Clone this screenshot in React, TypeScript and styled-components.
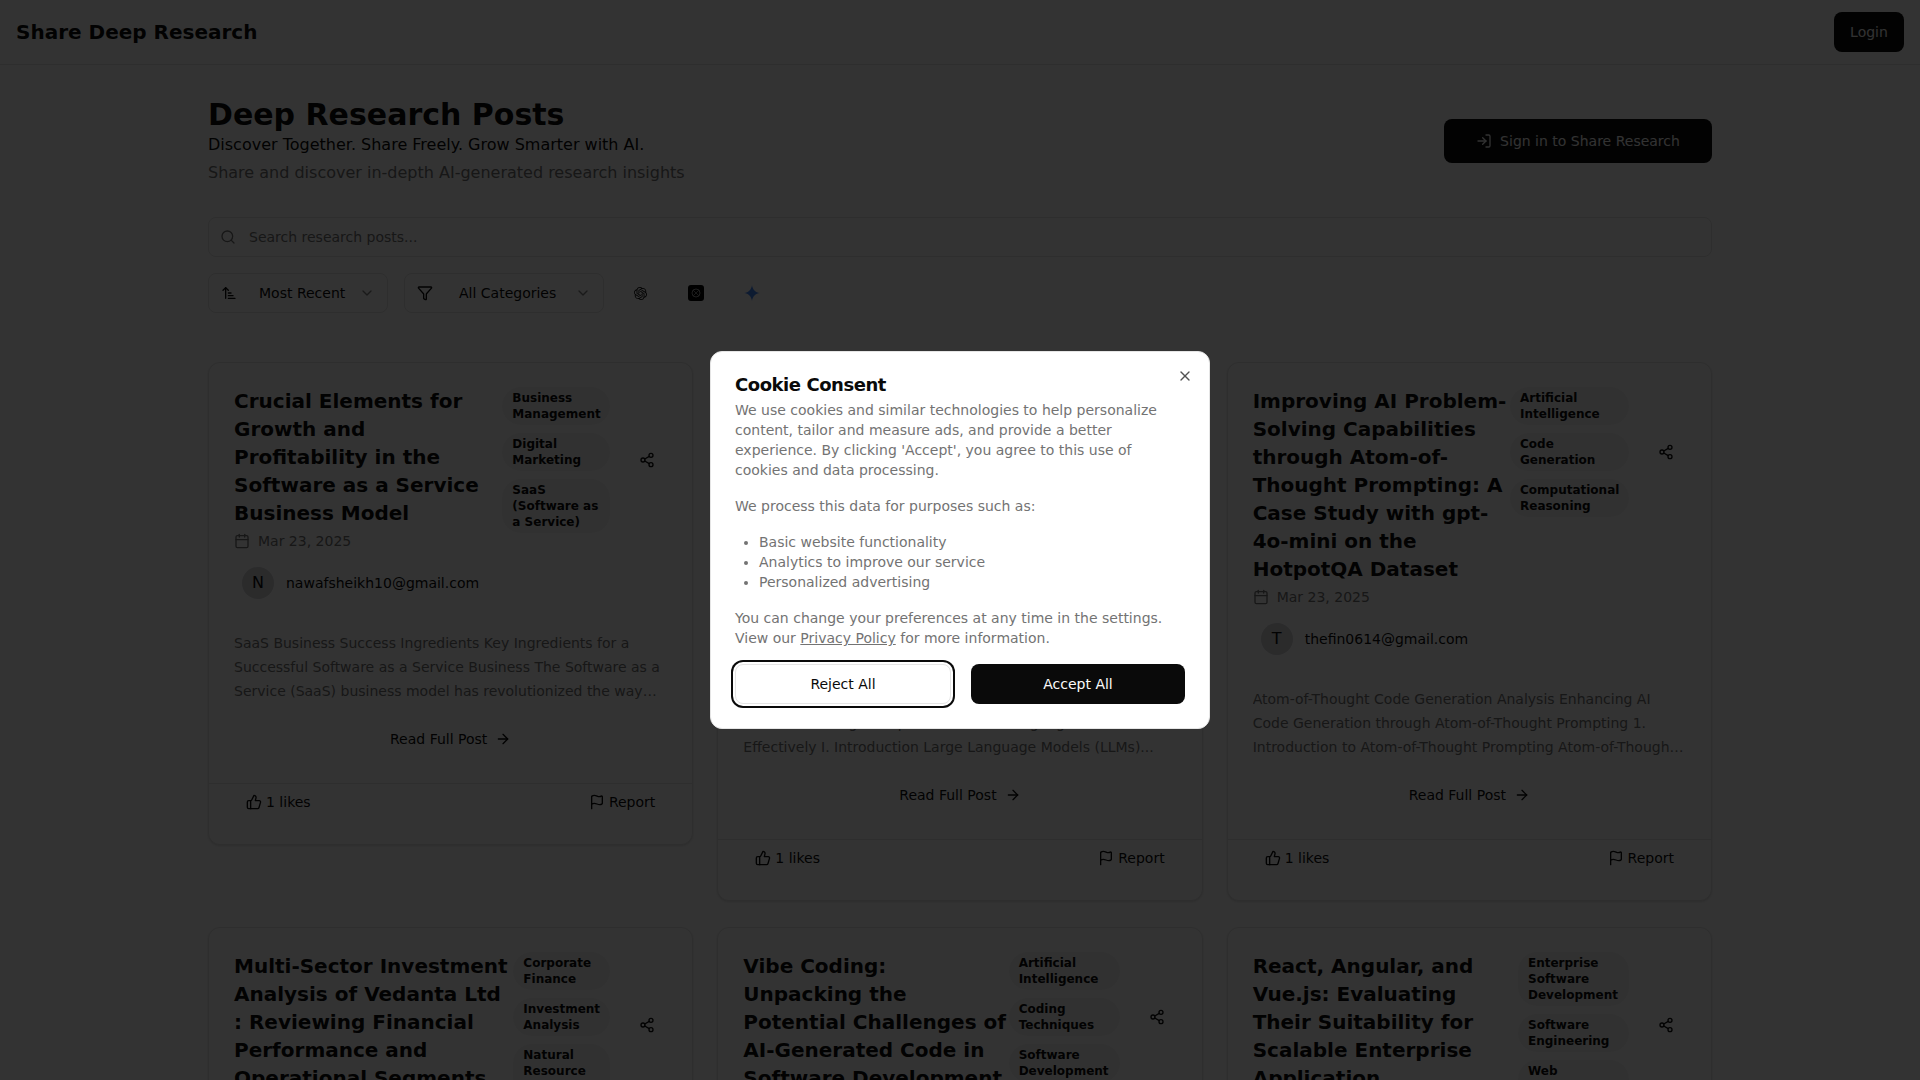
import React from 'react';
import styled, { createGlobalStyle } from 'styled-components';
import {
  ArrowRight, ArrowUpNarrowWide, Calendar, ChevronDown, Flag, Funnel, LogIn, Search, Share2, ThumbsUp, X,
} from 'lucide-react';
import { SiOpenai } from 'react-icons/si';

const GlobalStyle = createGlobalStyle`
  html, body { margin: 0; padding: 0; height: 100%; overflow: hidden; background: #fff; }
  body { font-family: "DejaVu Sans", sans-serif; color: #0a0a0a; font-size: 16px; line-height: 24px; }
  * { box-sizing: border-box; }
`;

const Page = styled.div`height: 1080px; overflow: hidden;`;

const TopBar = styled.header`
  height: 65px; padding: 0 16px; display: flex; align-items: center; justify-content: space-between;
  border-bottom: 1px solid #e5e5e5;
`;
const Brand = styled.div`font-size: 20px; line-height: 28px; font-weight: 700;`;
const PrimaryButton = styled.button<{ $h: number; $w: number }>`
  height: ${p => p.$h}px; width: ${p => p.$w}px; border: 0; border-radius: 8px; background: #0a0a0a; color: #fafafa;
  font: 14px/20px "DejaVu Sans", sans-serif; display: inline-flex; align-items: center; justify-content: center; gap: 8px; padding: 0;
`;

const Main = styled.main`width: 1504px; margin: 0 auto; padding-top: 32px;`;
const Intro = styled.section`display: flex; align-items: center; justify-content: space-between; margin-bottom: 32px;`;
const IntroText = styled.div`display: flex; flex-direction: column;`;
const Heading = styled.h1`margin: 0; font-size: 30px; line-height: 36px; font-weight: 700;`;
const Tagline = styled.p`margin: 0; font-size: 16px; line-height: 24px;`;
const Lead = styled.p`margin: 4px 0 0; font-size: 16px; line-height: 24px; color: #737373;`;

const SearchBox = styled.div`
  height: 40px; border: 1px solid #e5e5e5; border-radius: 8px; display: flex; align-items: center; gap: 13px;
  padding: 0 11px; font-size: 14px; color: #737373; margin-bottom: 16px;
`;

const Filters = styled.div`display: flex; align-items: center; gap: 16px; margin-bottom: 49px;`;
const Select = styled.div<{ $w: number }>`
  width: ${p => p.$w}px; height: 40px; border: 1px solid #e5e5e5; border-radius: 8px; display: flex; align-items: center;
  padding: 0 12px; font-size: 14px; color: #0a0a0a; white-space: nowrap;
  svg { flex: none; }
  svg:last-child { margin-left: auto; opacity: .5; }
`;
const SelectLabel = styled.span<{ $indent: number }>`margin-left: ${p => p.$indent}px;`;
const IconSlot = styled.div`width: 40px; height: 40px; display: flex; align-items: center; justify-content: center;`;

const Grid = styled.div`display: grid; grid-template-columns: repeat(3, 1fr); gap: 26px 24px; align-items: start;`;
const Card = styled.article`
  border: 1px solid #e5e5e5; border-radius: 12px; background: #fff;
  box-shadow: 0 1px 3px rgba(0,0,0,.1), 0 1px 2px -1px rgba(0,0,0,.1);
`;
const CardBody = styled.div`padding: 24px 25px;`;
const CardHead = styled.div`display: flex; align-items: flex-start; gap: 2px;`;
const TitleCol = styled.div`flex: 1; min-width: 0;`;
const CardTitle = styled.h2`margin: 0; font-size: 20px; line-height: 28px; font-weight: 700;`;
const TagGroup = styled.div`flex: none; display: flex; align-items: center; gap: 17px;`;
const TagCol = styled.div<{ $w: number }>`width: ${p => p.$w}px; flex: none; display: flex; flex-direction: column; gap: 8px;`;
const Tag = styled.span`
  display: block; padding: 3px 10px; border-radius: 19px; background: #f5f5f5; font-size: 12px; line-height: 16px; font-weight: 700;
`;
const ShareSlot = styled.div`
  width: 40px; height: 40px; flex: none; display: flex; align-items: center; justify-content: center;
`;
const DateRow = styled.div`
  margin-top: 4px; display: flex; align-items: center; gap: 8px; height: 20px; font-size: 14px; color: #737373;
`;
const AuthorRow = styled.div`margin: 16px 0 32px 8px; display: flex; align-items: center; gap: 12px; font-size: 14px;`;
const Avatar = styled.div`
  width: 32px; height: 32px; border-radius: 50%; background: #d4d4d8; font-size: 16px; display: flex; align-items: center; justify-content: center;
`;
const Excerpt = styled.p`
  margin: 0; font-size: 14px; line-height: 24px; color: #737373; height: 72px;
  display: -webkit-box; -webkit-line-clamp: 3; -webkit-box-orient: vertical; overflow: hidden;
`;
const ReadMore = styled.div`
  margin-top: 16px; height: 40px; display: flex; align-items: center; justify-content: center; gap: 8px; font-size: 14px;
`;
const CardFoot = styled.footer`
  border-top: 1px solid #e5e5e5; padding: 0 25px 24px; display: flex; justify-content: space-between;
`;
const GhostAction = styled.div`
  height: 36px; padding: 0 12px; display: flex; align-items: center; gap: 4px; font-size: 14px;
`;

const Overlay = styled.div`
  position: fixed; inset: 0; background: rgba(0,0,0,.8); display: flex; align-items: center; justify-content: center;
`;
const Dialog = styled.div`
  position: relative; width: 500px; height: 378px; background: #fff; border: 1px solid #e5e5e5; border-radius: 12px; padding: 24px;
`;
const CloseButton = styled.div`position: absolute; top: 15px; right: 16px; height: 16px; opacity: .7; color: #0a0a0a;`;
const DialogTitle = styled.h2`margin: 0; font-size: 18px; line-height: 18px; font-weight: 700; color: #0a0a0a; letter-spacing: -0.45px;`;
const DialogText = styled.div`
  margin-top: 6px; font-size: 14px; line-height: 20px; color: #737373;
  p { margin: 0 0 16px; }
  ul { margin: 0 0 16px; padding-left: 24px; }
  p:last-child { margin-bottom: 0; }
  a { color: inherit; text-decoration: underline; }
`;
const DialogActions = styled.div`margin-top: 16px; display: grid; grid-template-columns: 216px 214px; gap: 20px;`;
const RejectButton = styled.button`
  height: 40px; border: 1px solid #e5e5e5; border-radius: 8px; background: #fff; color: #0a0a0a;
  font: 14px/20px "DejaVu Sans", sans-serif; box-shadow: 0 0 0 2px #fff, 0 0 0 4px #0a0a0a; padding: 0;
`;
const AcceptButton = styled.button`
  height: 40px; border: 0; border-radius: 8px; background: #0a0a0a; color: #fafafa; font: 14px/20px "DejaVu Sans", sans-serif; padding: 0;
`;

type Post = { title: string; tags: string[]; tagW: number; date: string; email: string; excerpt: string };

const posts: Post[] = [
  {
    title: 'Crucial Elements for Growth and Profitability in the Software as a Service Business Model',
    tags: ['Business Management', 'Digital Marketing', 'SaaS (Software as a Service)'], tagW: 108,
    date: 'Mar 23, 2025', email: 'nawafsheikh10@gmail.com',
    excerpt: 'SaaS Business Success Ingredients Key Ingredients for a Successful Software as a Service Business The Software as a Service (SaaS) business model has revolutionized the way software is delivered and consumed by businesses',
  },
  {
    title: 'A Practical and Comprehensive Guide to Prompt Engineering: Getting Better Results from Large Language Models Effectively',
    tags: ['Artificial Intelligence', 'Prompt Engineering', 'Large Language Models'], tagW: 119,
    date: 'Mar 23, 2025', email: 'thefin0614@gmail.com',
    excerpt: 'Prompt Engineering Guide Mastering Prompt Engineering: A Guide to Writing Prompts for Modern Language Models Effectively I. Introduction Large Language Models (LLMs)...',
  },
  {
    title: 'Improving AI Problem-Solving Capabilities through Atom-of-Thought Prompting: A Case Study with gpt-4o-mini on the HotpotQA Dataset',
    tags: ['Artificial Intelligence', 'Code Generation', 'Computational Reasoning'], tagW: 119,
    date: 'Mar 23, 2025', email: 'thefin0614@gmail.com',
    excerpt: 'Atom-of-Thought Code Generation Analysis Enhancing AI Code Generation through Atom-of-Thought Prompting 1. Introduction to Atom-of-Thought Prompting Atom-of-Thought prompting is a technique for breaking problems into smaller parts',
  },
  {
    title: 'Multi-Sector Investment Analysis of Vedanta Ltd : Reviewing Financial Performance and Operational Segments',
    tags: ['Corporate Finance', 'Investment Analysis', 'Natural Resource Management'], tagW: 97,
    date: 'Mar 23, 2025', email: 'thefin0614@gmail.com', excerpt: 'Vedanta Ltd investment analysis',
  },
  {
    title: 'Vibe Coding: Unpacking the Potential Challenges of AI-Generated Code in Software Development',
    tags: ['Artificial Intelligence', 'Coding Techniques', 'Software Development'], tagW: 111,
    date: 'Mar 23, 2025', email: 'thefin0614@gmail.com', excerpt: 'Vibe coding analysis',
  },
  {
    title: 'React, Angular, and Vue.js: Evaluating Their Suitability for Scalable Enterprise Application',
    tags: ['Enterprise Software Development', 'Software Engineering', 'Web Development'], tagW: 111,
    date: 'Mar 23, 2025', email: 'thefin0614@gmail.com', excerpt: 'Framework evaluation',
  },
];

const GrokMark = () => (
  <svg width="16" height="16" viewBox="0 0 16 16" aria-hidden="true">
    <rect width="16" height="16" rx="3" fill="#000" />
    <circle cx="8" cy="8" r="4" fill="none" stroke="#9a9a9a" strokeWidth="1" />
    <path d="M5 5l6 6M11 5l-6 6" stroke="#9a9a9a" strokeWidth="0.8" />
  </svg>
);

const GeminiMark = () => (
  <svg width="16" height="16" viewBox="0 0 16 16" aria-hidden="true">
    <path d="M8 0C8.6 4.6 11.4 7.4 16 8 11.4 8.6 8.6 11.4 8 16 7.4 11.4 4.6 8.6 0 8 4.6 7.4 7.4 4.6 8 0Z" fill="#4285f4" />
  </svg>
);

const PostCard = ({ post }: { post: Post }) => (
  <Card>
    <CardBody>
      <CardHead>
        <TitleCol>
          <CardTitle>{post.title}</CardTitle>
          <DateRow><Calendar size={16} color="#737373" />{post.date}</DateRow>
        </TitleCol>
        <TagGroup>
          <TagCol $w={post.tagW}>
            {post.tags.map(t => <Tag key={t}>{t}</Tag>)}
          </TagCol>
          <ShareSlot><Share2 size={16} /></ShareSlot>
        </TagGroup>
      </CardHead>
      <AuthorRow><Avatar>{post.email[0].toUpperCase()}</Avatar>{post.email}</AuthorRow>
      <Excerpt>{post.excerpt}</Excerpt>
      <ReadMore>Read Full Post <ArrowRight size={16} /></ReadMore>
    </CardBody>
    <CardFoot>
      <GhostAction><ThumbsUp size={16} />1 likes</GhostAction>
      <GhostAction><Flag size={16} />Report</GhostAction>
    </CardFoot>
  </Card>
);

export default function App() {
  return (
    <Page>
      <GlobalStyle />
      <TopBar>
        <Brand>Share Deep Research</Brand>
        <PrimaryButton $h={40} $w={70}>Login</PrimaryButton>
      </TopBar>
      <Main>
        <Intro>
          <IntroText>
            <Heading>Deep Research Posts</Heading>
            <Tagline>Discover Together. Share Freely. Grow Smarter with AI.</Tagline>
            <Lead>Share and discover in-depth AI-generated research insights</Lead>
          </IntroText>
          <PrimaryButton $h={44} $w={268}><LogIn size={16} />Sign in to Share Research</PrimaryButton>
        </Intro>
        <SearchBox><Search size={16} color="#737373" />Search research posts...</SearchBox>
        <Filters>
          <Select $w={180}><ArrowUpNarrowWide size={16} /><SelectLabel $indent={22}>Most Recent</SelectLabel><ChevronDown size={16} /></Select>
          <Select $w={200}><Funnel size={16} /><SelectLabel $indent={26}>All Categories</SelectLabel><ChevronDown size={16} /></Select>
          <IconSlot><SiOpenai size={13} /></IconSlot>
          <IconSlot><GrokMark /></IconSlot>
          <IconSlot><GeminiMark /></IconSlot>
        </Filters>
        <Grid>
          {posts.map(p => <PostCard key={p.title} post={p} />)}
        </Grid>
      </Main>
      <Overlay>
        <Dialog>
          <CloseButton><X size={16} /></CloseButton>
          <DialogTitle>Cookie Consent</DialogTitle>
          <DialogText>
            <p>We use cookies and similar technologies to help personalize content, tailor and measure ads, and provide a better experience. By clicking 'Accept', you agree to this use of cookies and data processing.</p>
            <p>We process this data for purposes such as:</p>
            <ul>
              <li>Basic website functionality</li>
              <li>Analytics to improve our service</li>
              <li>Personalized advertising</li>
            </ul>
            <p>You can change your preferences at any time in the settings. View our <a href="#privacy">Privacy Policy</a> for more information.</p>
          </DialogText>
          <DialogActions>
            <RejectButton>Reject All</RejectButton>
            <AcceptButton>Accept All</AcceptButton>
          </DialogActions>
        </Dialog>
      </Overlay>
    </Page>
  );
}
